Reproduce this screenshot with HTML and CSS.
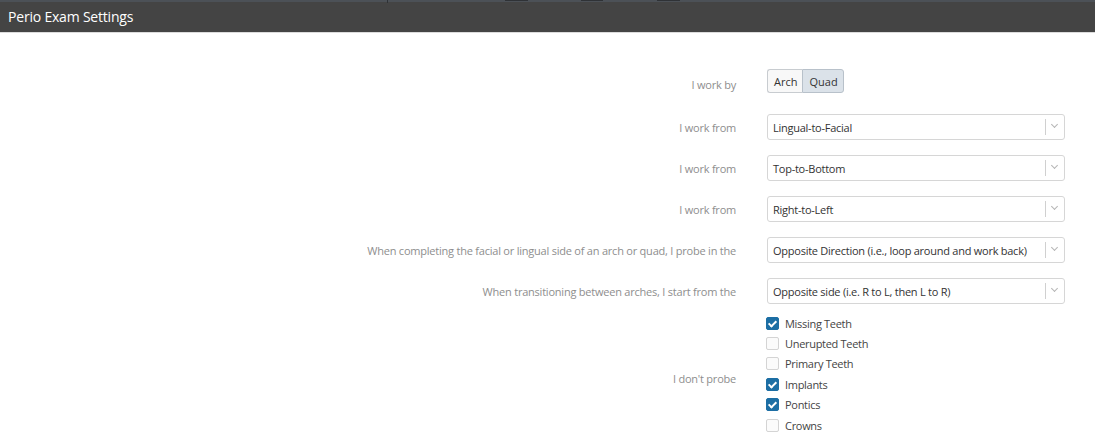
FILE: index.html
```html
<!DOCTYPE html>
<html lang="en">
<head>
  <meta charset="UTF-8" />
  <title>Perio Exam Settings</title>
  <link rel="stylesheet" href="styles.css">
</head>
<body>

  <div class="modal-header">
    <span class="tab-mark mark-1"></span>
    <span class="tab-mark mark-2"></span>
    <span class="tab-mark mark-3"></span>
    <span class="tab-mark mark-4"></span>
    <h1>Perio Exam Settings</h1>
  </div>

  <form class="settings">
    <div class="row row-first">
      <label class="row-label">I work by</label>
      <div class="toggle">
        <button type="button">Arch</button>
        <button type="button" class="active">Quad</button>
      </div>
    </div>

    <div class="row">
      <label class="row-label">I work from</label>
      <div class="select"><span>Lingual-to-Facial</span><i class="caret"></i></div>
    </div>

    <div class="row">
      <label class="row-label">I work from</label>
      <div class="select"><span>Top-to-Bottom</span><i class="caret"></i></div>
    </div>

    <div class="row">
      <label class="row-label">I work from</label>
      <div class="select"><span>Right-to-Left</span><i class="caret"></i></div>
    </div>

    <div class="row">
      <label class="row-label">When completing the facial or lingual side of an arch or quad, I probe in the</label>
      <div class="select"><span>Opposite Direction (i.e., loop around and work back)</span><i class="caret"></i></div>
    </div>

    <div class="row">
      <label class="row-label">When transitioning between arches, I start from the</label>
      <div class="select"><span>Opposite side (i.e. R to L, then L to R)</span><i class="caret"></i></div>
    </div>

    <div class="row row-checks">
      <label class="row-label">I don't probe</label>
      <div class="checks">
        <label class="check"><span class="box checked"></span>Missing Teeth</label>
        <label class="check"><span class="box"></span>Unerupted Teeth</label>
        <label class="check"><span class="box"></span>Primary Teeth</label>
        <label class="check"><span class="box checked"></span>Implants</label>
        <label class="check"><span class="box checked"></span>Pontics</label>
        <label class="check"><span class="box"></span>Crowns</label>
      </div>
    </div>
  </form>

</body>
</html>
```

FILE: styles.css
```css
body {
  font-family: 'Open Sans', 'Segoe UI', sans-serif;
  background-color: #ffffff;
  margin: 0;
  padding: 0;
  color: #333;
}

.modal-header {
  position: relative;
  height: 30px;
  background-color: #444444;
  border-top: 2px solid #4c5157;
  border-bottom: 1px solid #dcdcdc;
  padding: 0 8px;
}

.modal-header h1 {
  margin: 0;
  font-size: 14px;
  font-weight: normal;
  line-height: 30px;
  color: #fff;
  letter-spacing: -0.2px;
}

.tab-mark {
  position: absolute;
  top: -2px;
  height: 1px;
  background-color: #2f3236;
}

.mark-1 { left: 387px; width: 1px; height: 3px; }
.mark-2 { left: 505px; width: 23px; }
.mark-3 { left: 581px; width: 22px; }
.mark-4 { left: 657px; width: 23px; }

.settings {
  padding-top: 36px;
}

.row {
  display: grid;
  grid-template-columns: 736px 298px;
  column-gap: 31px;
  align-items: center;
  margin-bottom: 15px;
}

.row-first {
  margin-bottom: 21px;
}

.row-first .row-label {
  padding-top: 6px;
}

.row-label {
  text-align: right;
  font-size: 11px;
  color: #8e8e8e;
  letter-spacing: -0.22px;
}

.toggle {
  display: flex;
}

.toggle button {
  font-family: inherit;
  font-size: 11px;
  color: #333;
  background-color: #f8f8f8;
  border: 1px solid #c8ccd0;
  height: 24px;
  padding: 0 5px 0 6px;
  margin: 0;
  cursor: pointer;
}

.toggle button:first-child {
  border-radius: 3px 0 0 3px;
  border-right: none;
}

.toggle button:last-child {
  border-radius: 0 3px 3px 0;
}

.toggle button.active {
  background-color: #dbe2e9;
  border-color: #b8c1ca;
}

.select {
  display: flex;
  align-items: center;
  height: 26px;
  border: 1px solid #d6d6d6;
  border-radius: 3px;
  box-sizing: border-box;
  font-size: 11px;
  letter-spacing: -0.25px;
  padding-left: 5px;
}

.select span {
  flex: 1;
}

.caret {
  width: 18px;
  height: 16px;
  border-left: 1px solid #d0d0d0;
  position: relative;
}

.caret::after {
  content: '';
  position: absolute;
  left: 6px;
  top: 3px;
  width: 4px;
  height: 4px;
  border-right: 1px solid #b5b5b5;
  border-bottom: 1px solid #b5b5b5;
  transform: rotate(45deg);
}

.row-checks {
  margin-top: -6px;
}

.row-checks .row-label {
  padding-top: 8px;
}

.checks {
  display: flex;
  flex-direction: column;
  margin-left: -1px;
}

.check {
  display: flex;
  align-items: center;
  height: 20.4px;
  font-size: 11px;
  letter-spacing: -0.3px;
  color: #444;
}

.box {
  width: 11px;
  height: 11px;
  border: 1px solid #d4d4d4;
  border-radius: 2px;
  background-color: #fbfbfb;
  margin-right: 6px;
  position: relative;
}

.box.checked {
  background-color: #1c6ea4;
  border-color: #1c6ea4;
}

.box.checked::after {
  content: '';
  position: absolute;
  left: 3px;
  top: 1px;
  width: 3px;
  height: 6px;
  border-right: 2px solid #fff;
  border-bottom: 2px solid #fff;
  transform: rotate(45deg);
}
```
